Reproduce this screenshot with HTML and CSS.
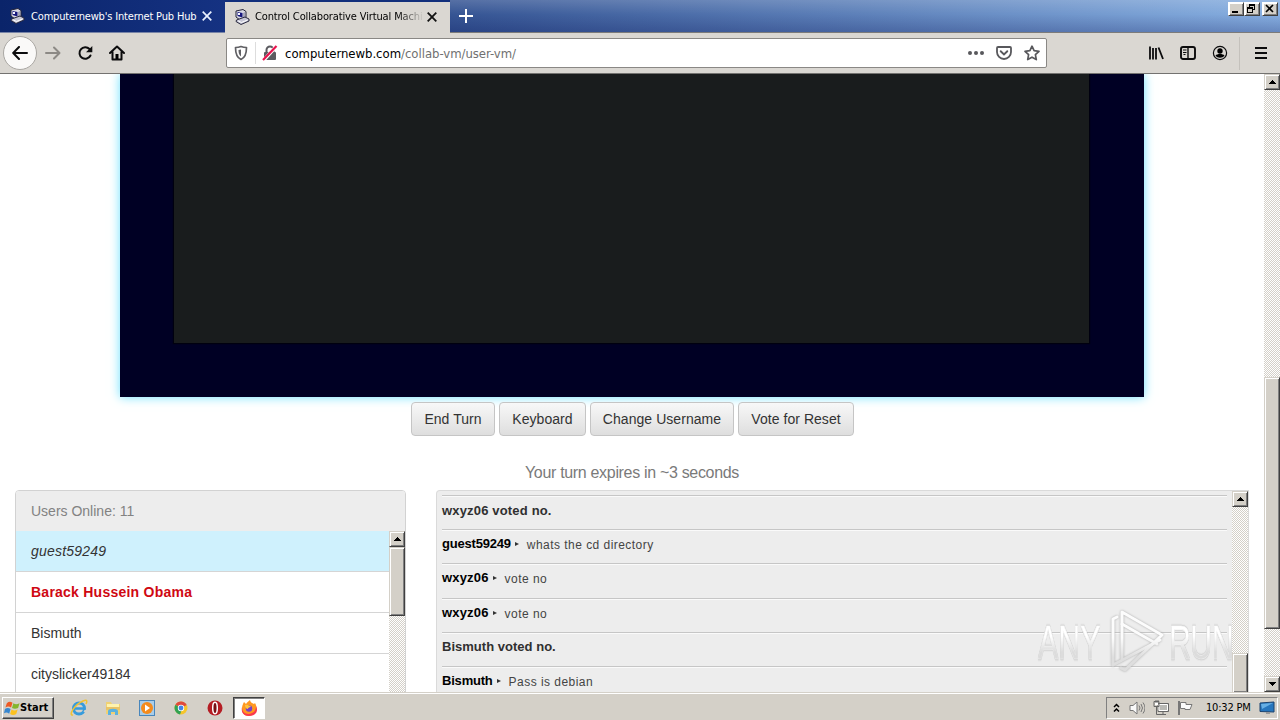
FILE: index.html
```html
<!DOCTYPE html>
<html lang="en">
<head>
<meta charset="utf-8">
<title>Control Collaborative Virtual Machines</title>
<link rel="stylesheet" href="styles.css">
</head>
<body>
<svg class="defs" width="0" height="0">
  <defs>
    <symbol id="pc" viewBox="0 0 16 16">
      <path d="M2 2l7-1.500 3 2v6l-6 2.500-4-3z" fill="#d8d8e4" stroke="#24243a"/>
      <path d="M3.500 3l5 1v4.500l-5-1.500z" fill="#15157c"/>
      <path d="M4 4h2v2H4z" fill="#f4f4ff"/>
      <path d="M9 4l2-1v5L9 9.500z" fill="#a6a6ba"/>
      <path d="M2.500 11L11 8l4 2v2l-8 3.500-5-3z" fill="#c6c6d6" stroke="#28283e"/>
      <path d="M4 11.800l3.500 1.700 6-2.500" fill="none" stroke="#fff"/>
    </symbol>
    <symbol id="up" viewBox="0 0 7 4"><path d="M3 0h1v1h1v1h1v1h1v1H0V3h1V2h1V1h1z" fill="#000"/></symbol>
    <symbol id="down" viewBox="0 0 7 4"><path d="M0 0h7v1H6v1H5v1H4v1H3V3H2V2H1V1H0z" fill="#000"/></symbol>
    <linearGradient id="wm-fill" gradientUnits="userSpaceOnUse" x1="0" y1="0" x2="0" y2="64"><stop offset=".45" stop-color="#fcfcfc"/><stop offset=".75" stop-color="#dedede"/></linearGradient>
  </defs>
</svg>

<header class="titlebar">
  <div class="tab">
    <svg class="favicon"><use href="#pc"/></svg>
    <span class="tab-title first">Computernewb's Internet Pub Hub</span>
    <svg class="tab-close" viewBox="0 0 10 10"><path d="M.7.7l8.600 8.600M9.300.7L.7 9.300" stroke="#e9f1ff" stroke-width="1.700"/></svg>
  </div>
  <div class="tab active">
    <svg class="favicon"><use href="#pc"/></svg>
    <span class="tab-title second">Control Collaborative Virtual Machi</span>
    <svg class="tab-close" viewBox="0 0 10 10"><path d="M.7.7l8.600 8.600M9.300.7L.7 9.300" stroke="#111" stroke-width="1.800"/></svg>
  </div>
  <svg class="new-tab" viewBox="0 0 14 14"><path d="M7 0v14M0 7h14" stroke="#fff" stroke-width="2"/></svg>
  <div class="window-buttons">
    <span class="wbtn"><svg viewBox="0 0 13 12"><path d="M3 8h6v2H3z"/></svg></span>
    <span class="wbtn"><svg viewBox="0 0 13 12"><path d="M4 1h6v6H8v3H2V4h2zM5 3v1h3v2h1V3zM3 6v3h4V6z" fill-rule="evenodd"/></svg></span>
    <span class="wbtn gap"><svg viewBox="0 0 13 12"><path d="M3 2l7 7M10 2L3 9" stroke="#000" stroke-width="1.600"/></svg></span>
  </div>
</header>

<nav class="toolbar">
  <span class="back"><svg width="16" height="14" viewBox="0 0 16 14"><path d="M15 7H1.500M7 1L1.200 7 7 13" fill="none" stroke="#0c0c0d" stroke-width="2" stroke-linecap="round" stroke-linejoin="round"/></svg></span>
  <svg class="ic fwd" viewBox="0 0 16 16"><path d="M1 8h13M9 2.500L14.500 8 9 13.500" fill="none" stroke="#8c8985" stroke-width="2" stroke-linecap="round" stroke-linejoin="round"/></svg>
  <svg class="ic reload" viewBox="0 0 16 16"><path d="M12.500 4A5.800 5.800 0 1 0 13.500 10.500" fill="none" stroke="#0c0c0d" stroke-width="2" stroke-linecap="round"/><path d="M15.300 1v6.300H9z" fill="#0c0c0d"/></svg>
  <svg class="ic home" viewBox="0 0 16 16"><path d="M1 8l7-6.500L15 8M3.500 7v7.500h9V7" fill="none" stroke="#0c0c0d" stroke-width="2" stroke-linecap="round" stroke-linejoin="round"/><path d="M6.500 9h3v5h-3z"/></svg>
  <div class="urlbar">
    <svg class="shield" viewBox="0 0 14 16"><path d="M7 1.500c2 .8 4 1 5.500 1 0 6-1 10-5.500 12C2.500 12.500 1.500 8.500 1.500 2.500c1.500 0 3.500-.2 5.500-1z" fill="none" stroke="#606064" stroke-width="1.700" stroke-linejoin="round"/><path d="M7 4.500v7c-2-1.500-2.500-3.500-2.500-6.500z" fill="#606064"/></svg>
    <span class="url-sep"></span>
    <svg class="lock" viewBox="0 0 16 16"><path d="M4.500 8V5a3.500 3.500 0 0 1 7 0v3" fill="none" stroke="#5b5b60" stroke-width="2"/><rect x="2" y="7" width="12" height="8" rx="1" fill="#5b5b60"/><path d="M1.500 15.500L14.500 1" stroke="#fff" stroke-width="3.400"/><path d="M1 15L14.500 1" stroke="#e8124d" stroke-width="2.200"/></svg>
    <span class="url"><b>computernewb.com</b>/collab-vm/user-vm/</span>
    <svg class="dots" viewBox="0 0 16 4"><g fill="#58585c"><circle cx="2" cy="2" r="2"/><circle cx="8" cy="2" r="2"/><circle cx="14" cy="2" r="2"/></g></svg>
    <svg class="pocket" viewBox="0 0 16 16"><path d="M2 2h12a1 1 0 0 1 1 1v4a7 7 0 0 1-14 0V3a1 1 0 0 1 1-1z" fill="none" stroke="#58585c" stroke-width="1.800"/><path d="M4.700 6.200L8 9.400l3.300-3.200" fill="none" stroke="#58585c" stroke-width="1.900" stroke-linecap="round"/></svg>
    <svg class="star" viewBox="0 0 16 16"><path d="M8 1.200l2.100 4.500 4.900.6-3.600 3.400.9 4.900L8 12.200l-4.300 2.400.9-4.900L1 6.300l4.900-.6z" fill="none" stroke="#58585c" stroke-width="1.700" stroke-linejoin="round"/></svg>
  </div>
  <svg class="ic library" viewBox="0 0 16 16"><path d="M2 1.500v13M5 3v11.500M8 3v11.500M10.500 2.500L15 14" stroke="#0c0c0d" stroke-width="1.800" fill="none"/></svg>
  <svg class="ic sidebar" viewBox="0 0 16 16"><rect x="1" y="2" width="14" height="12" rx="2" fill="none" stroke="#0c0c0d" stroke-width="1.900"/><path d="M8 2v12" stroke="#0c0c0d" stroke-width="1.400"/><path d="M3 5h3.500M3 7.500h3.500M3.500 9.500h2" stroke="#0c0c0d"/></svg>
  <svg class="ic account" viewBox="0 0 16 16"><circle cx="8" cy="8" r="6.600" fill="none" stroke="#0c0c0d" stroke-width="1.200"/><circle cx="8" cy="6" r="2.700"/><path d="M3.500 10.500c1.500-2 7.500-2 9 0-2 3-7 3-9 0z"/></svg>
  <span class="tool-sep"></span>
  <svg class="menu" viewBox="0 0 12 12"><path d="M0 1h12M0 6h12M0 11h12" stroke="#0c0c0d" stroke-width="2"/></svg>
</nav>

<div class="viewport">
  <main class="page">
    <div class="display"><div class="screen"></div></div>
    <div class="actions">
      <button class="btn w1">End Turn</button>
      <button class="btn w2">Keyboard</button>
      <button class="btn w3">Change Username</button>
      <button class="btn w4">Vote for Reset</button>
    </div>
    <p class="status">Your turn expires in ~3 seconds</p>
    <div class="columns">
      <section class="users">
        <div class="users-head">Users Online: 11</div>
        <div class="users-body">
          <ul class="user-list">
            <li class="me">guest59249</li>
            <li class="admin">Barack Hussein Obama</li>
            <li>Bismuth</li>
            <li>cityslicker49184</li>
          </ul>
          <div class="scroll"><span class="sbtn"><svg><use href="#up"/></svg></span><span class="thumb users-thumb"></span></div>
        </div>
      </section>
      <section class="chat">
        <div class="messages">
          <div class="msg notice">wxyz06 voted no.</div>
          <div class="msg"><b class="tight">guest59249</b><i></i><span class="says">whats the cd directory</span></div>
          <div class="msg"><b>wxyz06</b><i></i><span class="says">vote no</span></div>
          <div class="msg"><b>wxyz06</b><i></i><span class="says">vote no</span></div>
          <div class="msg notice last">Bismuth voted no.</div>
          <div class="msg"><b class="tight">Bismuth</b><i></i><span class="says">Pass is debian</span></div>
        </div>
        <div class="scroll"><span class="sbtn"><svg><use href="#up"/></svg></span><span class="space"></span><span class="thumb chat-thumb"></span></div>
      </section>
    </div>
  </main>
  <div class="scroll page-scroll"><span class="sbtn"><svg><use href="#up"/></svg></span><span class="page-space"></span><span class="thumb page-thumb"></span><span class="space"></span><span class="sbtn"><svg><use href="#down"/></svg></span></div>
</div>

<div class="watermark">
  <span class="wm any">ANY</span>
  <svg class="wm-logo" viewBox="0 0 56 64"><g fill="none" stroke="url(#wm-fill)" stroke-width="3" stroke-linejoin="round" stroke-linecap="round"><path d="M9 8L5 10v46l47-25"/><path d="M14 50V3l40 23-37 35-4-2"/><path d="M14 15l35 20"/></g></svg>
  <span class="wm run">RUN</span>
</div>

<footer class="taskbar">
  <div class="start">
    <svg viewBox="0 0 17 16"><path d="M3 3c2-2 4-2 6-.5L7.500 7.500C5.500 6 3.500 6 1.500 7.500z" fill="#ee5a24"/><path d="M10 3c2 1.500 4 1.300 6.500 0L15 8c-2 1-4.500 1.200-6.500 0z" fill="#84b52d"/><path d="M1 9c2-1.500 4-1.500 6 0l-1.500 5C3.500 12.500 2 12.500 0 13.500z" fill="#3787d0"/><path d="M8 9.500c2 1.500 4.500 1.300 6.500 0L13 14.500c-2 1.200-4.500 1.200-6.500 0z" fill="#fcc21f"/></svg>
    <span>Start</span>
  </div>
  <div class="quick">
    <svg viewBox="0 0 18 18"><circle cx="9" cy="9.500" r="5.500" fill="none" stroke="#379bdc" stroke-width="3"/><path d="M5 9.500h10" stroke="#379bdc" stroke-width="2.500"/><path d="M14.500 11h3v2h-4z" fill="#d4d0c8"/><path d="M3 16C-2 17 4 6 13 2c5-2 4 1 3 3" fill="none" stroke="#f1c232" stroke-width="1.500"/></svg>
    <svg viewBox="0 0 18 18"><path d="M2 3h5l1 2h8v10H2z" fill="#efd174"/><path d="M3 5h12v3H3z" fill="#fff3ad"/><path d="M2 8h14v3H2z" fill="#e9c467"/><path d="M4 16v-4c0-3 10-3 10 0v4h-3v-3H7v3z" fill="#5bb2df"/></svg>
    <svg viewBox="0 0 18 18"><rect x="1.500" y="1.500" width="15" height="15" fill="#a9cde9" stroke="#4886bc"/><circle cx="9" cy="9" r="6" fill="#f48b1d"/><path d="M7 5.500l5 3.500-5 3.500z" fill="#fff"/></svg>
    <svg viewBox="0 0 18 18"><circle cx="9" cy="9" r="6.500" fill="#f5c52c"/><path d="M9 9L3.400 5.700A6.500 6.500 0 0 1 14.700 6z" fill="#df4a3d"/><path d="M3.400 5.700A6.500 6.500 0 0 0 8 15.400L10 10z" fill="#31a253"/><circle cx="9" cy="9" r="3.200" fill="#fff"/><circle cx="9" cy="9" r="2.400" fill="#4384e6"/></svg>
    <svg viewBox="0 0 18 18"><circle cx="9" cy="9" r="7.500" fill="#b51d24"/><ellipse cx="9" cy="9" rx="2.300" ry="5.700" fill="#781014" stroke="#fff" stroke-width="1.500"/></svg>
  </div>
  <div class="task">
    <svg viewBox="0 0 18 18"><path d="M4 3l2 2c1-2 3-3 4-4 0 2 2 3 4 4l1-1c3 5 2 12-6 13-7 0-9-7-5-14z" fill="#ff9821"/><path d="M2 8c0 7 6 8 10 6 3-1 4-4 4-7 3 6-1 10-7 10S1 13 2 8z" fill="#fa394e"/><circle cx="9" cy="9.500" r="3.200" fill="#7841c6"/><path d="M5 6c3-1 4 1 6 1-1 2-3 1-3 3-2 0-3-2-3-4z" fill="#ffc43b"/></svg>
  </div>
  <div class="tray">
    <svg class="chev" viewBox="0 0 7 10"><path d="M1 4l2.500-2.500L6 4M1 8.500L3.500 6 6 8.500" fill="none" stroke="#000" stroke-width="1.500"/></svg>
    <svg class="tic" viewBox="0 0 16 16"><path d="M1 5.500h3L8 2v12l-4-3.500H1z" fill="#f9f9f9" stroke="#777"/><path d="M10 5.500q2 2.500 0 5M12 4q3 4 0 8M14 2.500q4 5.500 0 11" fill="none" stroke="#777"/></svg>
    <svg class="tic" viewBox="0 0 16 16"><path d="M5 3.500h10.500v8H5z" fill="#b9b9b5" stroke="#666"/><path d="M6 4.500h8.500v6H6z" fill="none" stroke="#fff"/><path d="M1 1.500h5v5H1zM3.500 6.500v8H13M10 12v2.500" fill="none" stroke="#666"/><path d="M2 2h3v3H2z" fill="#fff"/><path d="M3 0v3M5 0v3" stroke="#666"/></svg>
    <svg class="tic" viewBox="0 0 16 16"><path d="M2 1v14" stroke="#777" stroke-width="2"/><path d="M3.500 2.500H9v2h6l-2 5H8v-1H3.500z" fill="#fafafa" stroke="#777"/></svg>
    <span class="clock">10:32 PM</span>
    <svg class="desktop" viewBox="0 0 16 14"><path d="M1 2l14-1v10l-14-.5z" fill="#2676bd" stroke="#1b436f"/><path d="M2 3l12-1L3 8z" fill="#66afe4"/><path d="M7 11h4v2H7z" fill="#999"/></svg>
  </div>
</footer>
</body>
</html>
```
FILE: styles.css
```css
* { box-sizing: border-box; }
body {
  margin: 0;
  width: 1280px;
  height: 720px;
  display: flex;
  flex-direction: column;
  overflow: hidden;
  position: relative;
  background: #fff;
  font-family: "Liberation Sans", Arial, sans-serif;
}
svg { display: block; flex: none; }
.defs { position: absolute; }

/* Window title bar and tabs */
.titlebar {
  flex: none;
  height: 33px;
  display: flex;
  align-items: flex-start;
  background: linear-gradient(180deg, rgba(255,255,255,.16) 0, rgba(255,255,255,0) 45%, rgba(0,10,80,.23) 100%), linear-gradient(90deg, #0a246a, #86aee0);
  border-bottom: 1px solid #7c7b7a;
}
.tab {
  width: 225px;
  height: 33px;
  padding: 0 12px 0 9px;
  display: flex;
  align-items: center;
  background: linear-gradient(90deg, #0a246a, #153282);
  border-bottom: 1px solid #7884a7;
  color: #fff;
}
.tab.active { background: #dad7d2; color: #000; border-top: 2px solid #122f7c; border-bottom: 0; }
.tab.active .favicon, .tab.active .tab-title, .tab.active .tab-close { margin-top: -1px; }
.favicon { width: 16px; height: 16px; margin-right: 6px; }
.tab.active .favicon { margin-right: 5px; }
.tab-title {
  width: 171px;
  overflow: hidden;
  white-space: nowrap;
  font: 11px/18px "DejaVu Sans Condensed", "DejaVu Sans", sans-serif;
}
.tab-title.first { letter-spacing: -.17px; padding-top: 1px; }
.tab-title.second { width: 172px; letter-spacing: -.13px; -webkit-mask-image: linear-gradient(90deg, #000 143px, transparent 169px); mask-image: linear-gradient(90deg, #000 143px, transparent 169px); }
.tab-close { width: 10px; height: 10px; }
.new-tab { width: 14px; height: 14px; margin: 9px 0 0 9px; }
.window-buttons { display: flex; margin: 2px 2px 0 auto; }
.wbtn, .sbtn, .thumb {
  background: #d4d0c8;
  border: 1px solid;
  border-color: #d4d0c8 #404040 #404040 #d4d0c8;
  box-shadow: inset 1px 1px #fff, inset -1px -1px #808080;
}
.wbtn { width: 16px; height: 14px; border-color: #fff #404040 #404040 #fff; }
.wbtn svg { width: 13px; height: 12px; }
.wbtn.gap { margin-left: 2px; }

/* Navigation toolbar */
.toolbar {
  flex: none;
  height: 41px;
  display: flex;
  align-items: center;
  background: #dad7d2;
  border-bottom: 1px solid #737270;
}
.back {
  width: 34px;
  height: 34px;
  margin-left: 3px;
  border: 1px solid #aaa7a3;
  border-radius: 50%;
  background: #faf9f8;
  display: grid;
  place-items: center;
}
.ic { width: 16px; height: 16px; }
.fwd { margin-left: 8px; }
.reload, .home { margin-left: 16px; }
.urlbar {
  width: 821px;
  height: 30px;
  margin-left: 101px;
  padding: 0 7px;
  display: flex;
  align-items: center;
  background: #fff;
  border: 1px solid #8a8885;
  border-radius: 2px;
}
.shield { width: 14px; height: 16px; }
.url-sep { width: 1px; height: 22px; background: #ddd; margin: 0 6px 0 7px; }
.lock { width: 16px; height: 16px; }
.url { margin-left: 7px; padding-top: 1px; color: #707070; font: 13px/20px "DejaVu Sans Condensed", "DejaVu Sans", sans-serif; letter-spacing: -.03px; }
.url b { color: #000; font-weight: 400; }
.dots { width: 16px; height: 4px; margin-left: auto; }
.pocket, .star { width: 16px; height: 16px; margin-left: 12px; }
.star { margin-right: -1px; }
.library { margin-left: 101px; }
.sidebar, .account { margin-left: 16px; }
.tool-sep { width: 1px; height: 33px; margin-left: 11px; background: #c4c1bc; }
.menu { width: 12px; height: 12px; margin-left: 15px; }

/* Page */
.viewport { flex: none; height: 618px; display: flex; overflow: hidden; }
.page { width: 1264px; height: 618px; overflow: hidden; }
.display {
  width: 1024px;
  height: 323px;
  margin: 0 120px;
  padding: 0 55px 0 54px;
  background: #000024;
  box-shadow: 0 0 10px #6be1ff;
}
.screen { height: 269px; background: #191c1d; box-shadow: 0 0 1px 1px #00000f; }
.actions { display: flex; gap: 4px; padding: 5px 0 0 411px; position: relative; }
.btn {
  height: 34px;
  padding: 0 0 1px;
  border: 1px solid #c5c5c5;
  border-radius: 4px;
  background: linear-gradient(#f8f8f8, #dedede);
  color: #333;
  font: 14px/20px "Liberation Sans", Arial, sans-serif;
  letter-spacing: .05px;
}
.w1 { width: 84px; }
.w2 { width: 87px; }
.w3 { width: 144px; }
.w4 { width: 116px; }
.status { margin: 26px 0 8px; height: 20px; line-height: 21px; text-align: center; font-size: 16px; letter-spacing: -.32px; color: #7a7a7a; }
.columns { display: flex; gap: 30px; padding-left: 15px; }
.users { width: 391px; height: 250px; border: 1px solid #d2d2d2; border-radius: 4px 4px 0 0; overflow: hidden; }
.users-head { height: 40px; padding-left: 15px; background: #ededed; color: #828282; font-size: 14px; line-height: 40px; }
.users-body { display: flex; }
.user-list { width: 373px; margin: 0; padding: 0; list-style: none; }
.user-list li { height: 41px; padding-left: 15px; border-bottom: 1px solid #d5d5d5; line-height: 41px; font-size: 14px; color: #333; }
.user-list .me { background: #cff1fd; font-style: italic; letter-spacing: .2px; }
.user-list .admin { color: #cf0812; font-weight: 700; letter-spacing: .24px; }
.scroll {
  width: 16px;
  flex: none;
  display: flex;
  flex-direction: column;
  background: repeating-conic-gradient(#d4d0c8 0 25%, #fff 0 50%) 0 0 / 2px 2px;
}
.sbtn { width: 16px; height: 16px; flex: none; display: grid; place-items: center; }
.sbtn svg { width: 7px; height: 4px; }
.thumb { width: 16px; flex: none; }
.users-thumb { height: 69px; }
.space { flex: 1; }
.chat {
  width: 813px;
  height: 202px;
  padding-left: 5px;
  display: flex;
  background: #ededed;
  border: 1px solid #dadada;
  border-bottom: 0;
  border-radius: 4px 0 0 0;
}
.messages { width: 785px; margin-right: 5px; padding-top: 4px; }
.msg {
  height: 34.200px;
  padding-top: 6px;
  display: flex;
  align-items: flex-start;
  border-top: 1px solid #c6c6c6;
  box-shadow: inset 0 1px #fafafa;
  color: #444;
  font-size: 12px;
  line-height: 18px;
}
.msg.notice { font-weight: 700; font-size: 13px; color: #303030; letter-spacing: .17px; }
.msg.notice.last { letter-spacing: .02px; padding-top: 5px; }
.msg b { color: #000; font-size: 13px; line-height: 16px; letter-spacing: .17px; }
.msg b.tight { letter-spacing: -.2px; }
.msg i { margin: 6px 8px 0 4px; border-left: 4px solid #333; border-top: 2px solid transparent; border-bottom: 2px solid transparent; }
.says { letter-spacing: .46px; }
.chat-thumb { height: 39px; border-bottom: 0; }
.page-space { height: 287px; flex: none; }
.page-thumb { height: 252px; }

/* Overlay mark */
.watermark { position: absolute; left: 1038px; top: 608px; width: 194px; height: 66px; display: flex; }
.wm {
  flex: none;
  margin-top: 14px;
  height: 40px;
  font: 49px/40px "Liberation Sans", Arial, sans-serif;
  color: transparent;
  background: linear-gradient(#fff 35%, #dcdcdc 75%);
  -webkit-background-clip: text;
  background-clip: text;
  -webkit-text-stroke: .6px rgba(248,248,248,.7);
  filter: drop-shadow(0 0 1px #aaa);
  transform: scaleX(.62);
  transform-origin: left;
}
.any { width: 106px; margin-right: -36px; }
.wm-logo { width: 56px; height: 64px; margin-top: 1px; filter: drop-shadow(0 0 1px #aaa); }
.run { width: 108px; margin-left: 5px; letter-spacing: -1px; }

/* Taskbar */
.taskbar { height: 28px; display: flex; align-items: center; padding: 2px 2px 0 2px; background: #d4d0c8; border-top: 1px solid #d4d0c8; box-shadow: inset 0 1px #fff; }
.start {
  width: 52px;
  height: 22px;
  padding-left: 1px;
  display: flex;
  align-items: center;
  border: 1px solid;
  border-color: #fff #404040 #404040 #fff;
  box-shadow: inset -1px -1px #808080;
  font: 700 11px/18px "DejaVu Sans Condensed", "DejaVu Sans", sans-serif;
}
.start svg { width: 16px; height: 16px; }
.start span { letter-spacing: .05px; }
.quick { display: flex; gap: 16px; margin-left: 16px; }
.quick svg, .task svg { width: 18px; height: 18px; }
.task { width: 32px; height: 22px; margin-left: 9px; display: grid; place-items: center; background: #fff; border: 1px solid; border-color: #404040 #fff #fff #404040; box-shadow: inset 1px 1px #808080; }
.tray { width: 172px; height: 22px; margin-left: auto; padding-left: 6px; display: flex; align-items: center; border: 1px solid; border-color: #808080 #fff #fff #808080; }
.chev { width: 7px; height: 10px; margin-right: 9px; }
.tic { width: 16px; height: 16px; margin-right: 8px; }
.clock { width: 46px; margin-left: 5px; white-space: nowrap; font: 11px/18px "DejaVu Sans Condensed", "DejaVu Sans", sans-serif; letter-spacing: -.2px; }
.desktop { width: 16px; height: 14px; margin-left: 7px; }
```
